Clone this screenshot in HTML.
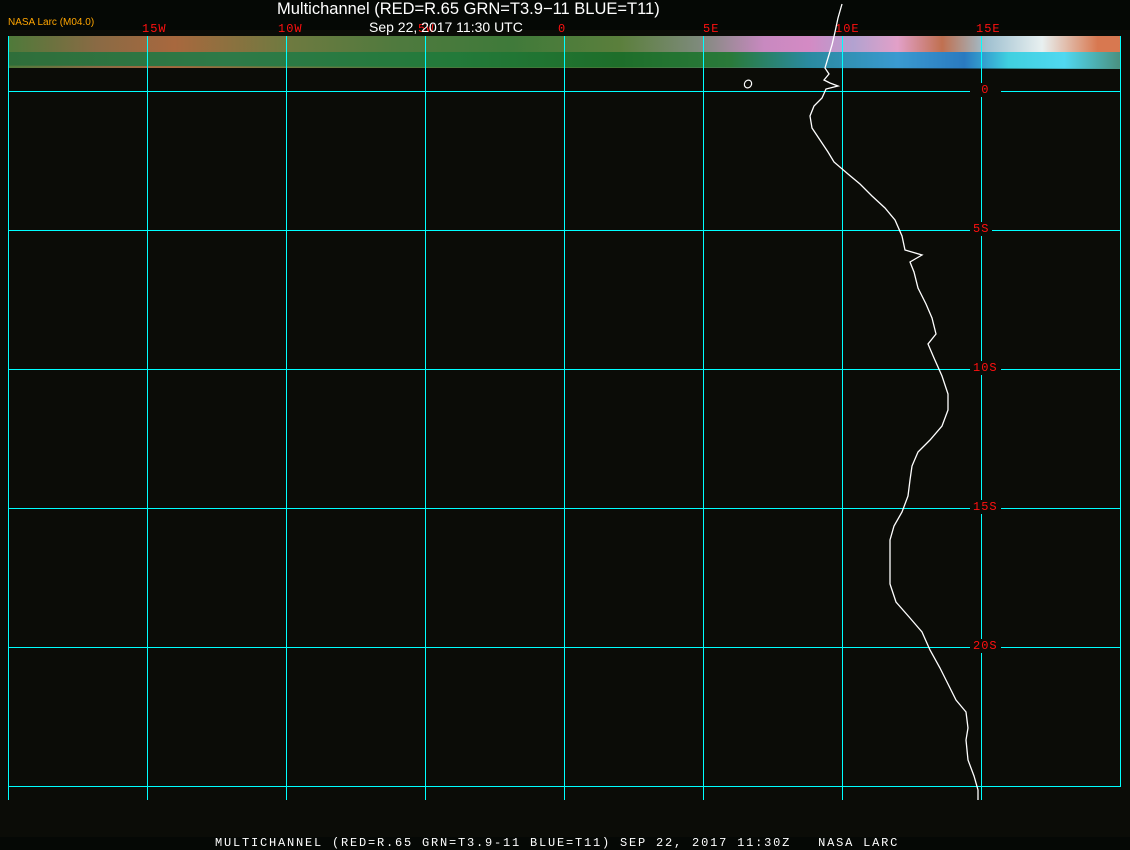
<!DOCTYPE html>
<html><head><meta charset="utf-8"><style>
body{margin:0;width:1130px;height:850px;background:#050805;position:relative;overflow:hidden;font-family:"Liberation Sans",sans-serif}
.a{position:absolute}
.map{left:0;top:30px;width:1130px;height:807px;background:#0b0c07}
.v{position:absolute;top:36px;width:1px;height:764px;background:#00ffff}
.h{position:absolute;left:8px;width:1113px;height:1px;background:#00ffff}
.r{position:absolute;color:#ff1010;font-size:12px;font-family:"Liberation Mono",monospace;letter-spacing:1px}
.lab{position:absolute;color:#ff1010;font-size:12px;font-family:"Liberation Mono",monospace;background:#0b0c07;padding:0 3px;letter-spacing:1px}
</style></head><body>
<div class="a map"></div>
<div class="a" style="left:8px;top:36px;width:1112px;height:32px;background:linear-gradient(90deg,#4e7a3a 0%,#8a6a44 8%,#a8683e 15%,#6f7a40 25%,#4f7a3e 35%,#3f7a3a 45%,#5b7f3c 55%,#7d8a7a 62%,#c889c0 68%,#d48ac4 72%,#b2a2d0 76%,#e2a0c8 80%,#c07050 84%,#9fc0d0 88%,#e8f0f0 93%,#d87850 98%)"></div>
<div class="a" style="left:8px;top:52px;width:1112px;height:17px;background:linear-gradient(90deg,#2f6e3a 0%,#2e7a48 20%,#237a3a 40%,#1e6e2a 55%,#2a7a3a 65%,#2a8aa0 72%,#3a9ad0 80%,#2a7ac0 86%,#40d0e0 90%,#50d8f0 95%,#4a9080 100%);clip-path:polygon(0 0,100% 0,100% 100%,50% 90%,0 80%)"></div>
<div class="v" style="left:8px"></div><div class="v" style="left:147px"></div><div class="v" style="left:286px"></div><div class="v" style="left:425px"></div><div class="v" style="left:564px"></div><div class="v" style="left:703px"></div><div class="v" style="left:842px"></div><div class="v" style="left:981px"></div><div class="v" style="left:1120px;height:750px"></div>
<div class="h" style="top:91px"></div><div class="h" style="top:230px"></div><div class="h" style="top:369px"></div><div class="h" style="top:508px"></div><div class="h" style="top:647px"></div><div class="h" style="top:786px"></div>
<div class="lab" style="left:970px;top:83px">&nbsp;0&nbsp;</div>
<div class="lab" style="left:970px;top:222px">5S</div>
<div class="lab" style="left:970px;top:361px">10S</div>
<div class="lab" style="left:970px;top:500px">15S</div>
<div class="lab" style="left:970px;top:639px">20S</div>
<div class="r" style="left:142px;top:22px">15W</div>
<div class="r" style="left:278px;top:22px">10W</div>
<div class="r" style="left:418px;top:22px">5W</div>
<div class="r" style="left:558px;top:22px">0</div>
<div class="r" style="left:703px;top:22px">5E</div>
<div class="r" style="left:835px;top:22px">10E</div>
<div class="r" style="left:976px;top:22px">15E</div>
<div class="a" style="left:277px;top:0px;color:#fff;font-size:16.5px">Multichannel (RED=R.65 GRN=T3.9−11 BLUE=T11)</div>
<div class="a" style="left:369px;top:19px;color:#fff;font-size:14px">Sep 22, 2017 11:30 UTC</div>
<div class="a" style="left:8px;top:17px;color:#ffa500;font-size:10px">NASA Larc (M04.0)</div>
<svg class="a" style="left:0;top:0" width="1130" height="850">
<polyline fill="none" stroke="#fff" stroke-width="1.3" points="842,4 838,18 835,32 832,45 828,58 825,68 829,74 824,80 830,83 838,86 826,89 822,98 814,106 810,116 812,128 820,140 828,152 834,162 848,174 860,184 872,196 885,208 895,220 902,236 905,250 922,255 910,262 914,272 918,288 926,304 932,318 936,334 928,344 934,358 942,376 948,394 948,410 942,426 930,440 918,452 912,466 910,480 908,496 902,512 894,526 890,540 890,560 890,584 896,602 910,618 922,632 930,650 940,668 948,684 956,700 966,712 968,728 966,740 968,760 974,776 978,790 978,800"/>
<ellipse cx="748" cy="84" rx="3.5" ry="4" fill="none" stroke="#fff" stroke-width="1.2" transform="rotate(30 748 84)"/>
</svg>
<div class="a" style="left:215px;top:836px;color:#fff;font-size:12px;font-family:'Liberation Mono',monospace;letter-spacing:1.8px;white-space:pre">MULTICHANNEL (RED=R.65 GRN=T3.9-11 BLUE=T11) SEP 22, 2017 11:30Z   NASA LARC</div>
</body></html>
